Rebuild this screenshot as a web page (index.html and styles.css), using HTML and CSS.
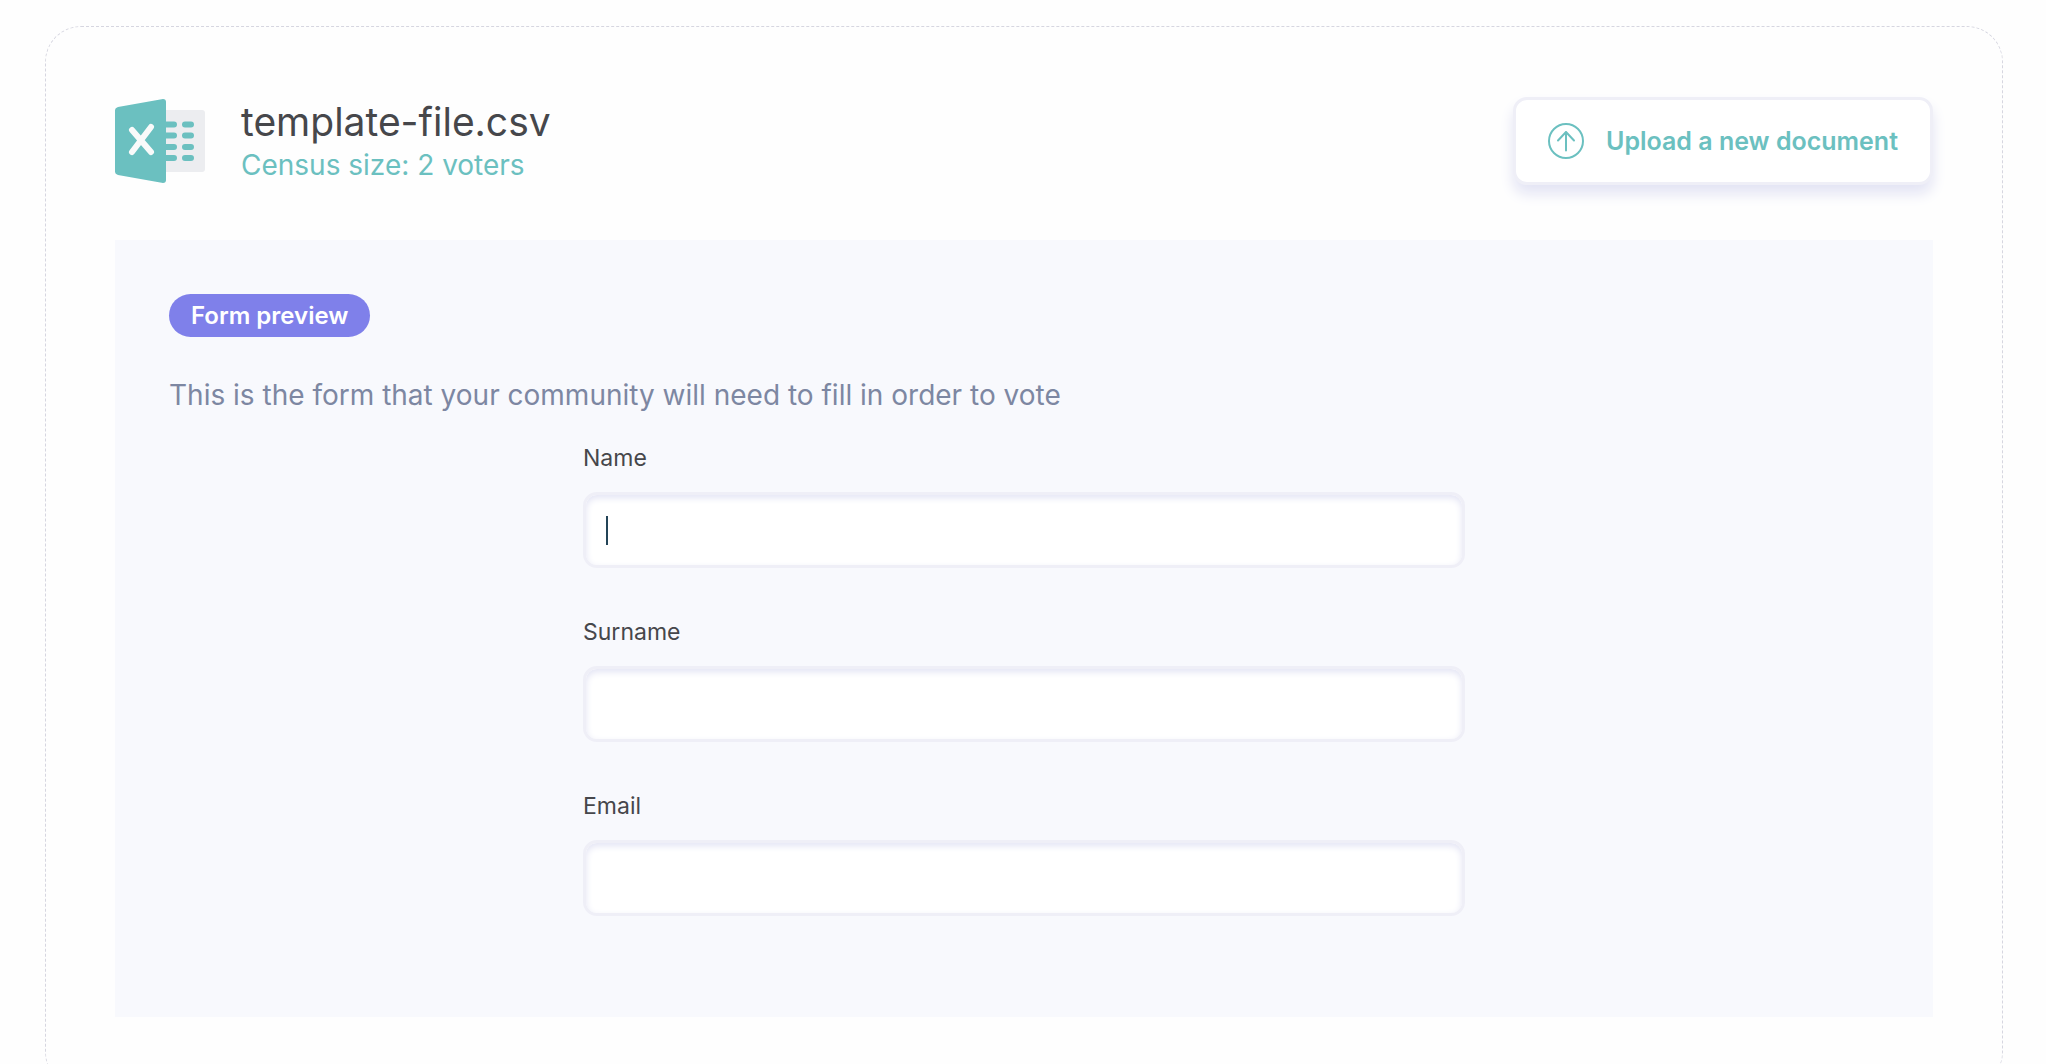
FILE: index.html
```html
<!DOCTYPE html>
<html lang="en">
<head>
<meta charset="utf-8">
<title>Census</title>
<link rel="stylesheet" href="styles.css">
</head>
<body>
<main class="card">
  <header class="file-header">
    <svg class="file-icon" viewBox="0 0 90 84" aria-hidden="true">
      <rect x="45" y="11" width="45" height="62" rx="3" fill="#ecedf0"/>
      <path d="M3 8 48 0Q51 0 51 3V81Q51 84 48 84L3 76Q0 75 0 73V11Q0 9 3 8Z" fill="#6bc0c0"/>
      <path d="M48 25.500H59M70 25.500H76M48 36.500H59M70 36.500H76M48 48H59M70 48H76M48 59H59M70 59H76" stroke="#6bc0c0" stroke-width="6" stroke-linecap="round"/>
      <path d="M17 31 36 53M36 28 17 53" stroke="#f9fafa" stroke-width="6" stroke-linecap="round"/>
    </svg>
    <div class="file-info">
      <h1 class="file-name">template-file.csv</h1>
      <p class="file-size">Census size: 2 voters</p>
    </div>
    <button class="upload" type="button">
      <svg class="upload-icon" viewBox="0 0 36 36" fill="none" stroke="#6bc0c0" stroke-width="2" stroke-linecap="round" stroke-linejoin="round" aria-hidden="true">
        <circle cx="18" cy="18" r="17"/>
        <path d="M18 27.500V9M10 17.500 18 9 26 17.500"/>
      </svg>
      Upload a new document
    </button>
  </header>
  <section class="preview">
    <span class="badge">Form preview</span>
    <p class="intro">This is the form that your community will need to fill in order to vote</p>
    <form class="form">
      <div class="field">
        <label class="label" for="name">Name</label>
        <input class="input input-active" id="name" type="text">
      </div>
      <div class="field">
        <label class="label" for="surname">Surname</label>
        <input class="input" id="surname" type="text">
      </div>
      <div class="field">
        <label class="label" for="email">Email</label>
        <input class="input" id="email" type="email">
      </div>
    </form>
  </section>
</main>
</body>
</html>
```
FILE: styles.css
```css
* {
  box-sizing: border-box;
}

body {
  margin: 26px 43px 26px 45px;
  background: #fefefe;
  color: #46474b;
  font-family: Inter, "Liberation Sans", sans-serif;
}

.card {
  padding: 70px 69px;
  border: 1px dashed #d6d6e0;
  border-radius: 36px;
}

.file-header {
  display: flex;
  align-items: center;
  min-height: 88px;
  margin-bottom: 55px;
}

.file-icon {
  width: 90px;
  height: 84px;
  margin-right: 36px;
}

.file-info {
  flex: 1;
  padding-top: 2px;
}

.file-name,
.file-size,
.intro {
  margin: 0;
  font-weight: 400;
}

.file-name {
  font-size: 39px;
  line-height: 46px;
}

.file-size {
  color: #6bc0c0;
  font-size: 28px;
  line-height: 40px;
}

.upload {
  display: flex;
  align-items: center;
  gap: 22px;
  height: 88px;
  padding: 0 32px;
  border: 3px solid #efeff7;
  border-radius: 14px;
  background: #fff;
  box-shadow: 0 9px 14px #e3e4f4;
  color: #6bc0c0;
  font: 600 25px/32px Inter, "Liberation Sans", sans-serif;
}

.upload-icon {
  width: 36px;
  height: 36px;
}

.preview {
  padding: 54px 54px 101px;
  background: #f8f9fd;
}

.badge {
  display: block;
  width: fit-content;
  padding: 0 22px;
  border-radius: 22px;
  background: #7f80ea;
  color: #fff;
  font-size: 24px;
  font-weight: 600;
  line-height: 43px;
}

.intro {
  margin: 38px 0 27px;
  color: #7d87a2;
  font-size: 28px;
  line-height: 40px;
}

.form {
  display: grid;
  gap: 48px;
  max-width: 882px;
  margin: 0 auto;
}

.field {
  display: grid;
}

.label {
  margin-bottom: 18px;
  font-size: 23px;
  line-height: 32px;
}

.input {
  width: 100%;
  height: 76px;
  padding: 0 20px;
  border: 3px solid #efeff7;
  border-radius: 14px;
  background: #fff;
  box-shadow: inset 0 3px 7px #e3e4f4;
  color: #234457;
  font: 400 24px/32px Inter, "Liberation Sans", sans-serif;
  outline: none;
}

/* text caret of the field being edited */
.input-active {
  background: linear-gradient(#234457, #234457) 20px 50% / 2px 29px no-repeat #fff;
  caret-color: transparent;
}
```
